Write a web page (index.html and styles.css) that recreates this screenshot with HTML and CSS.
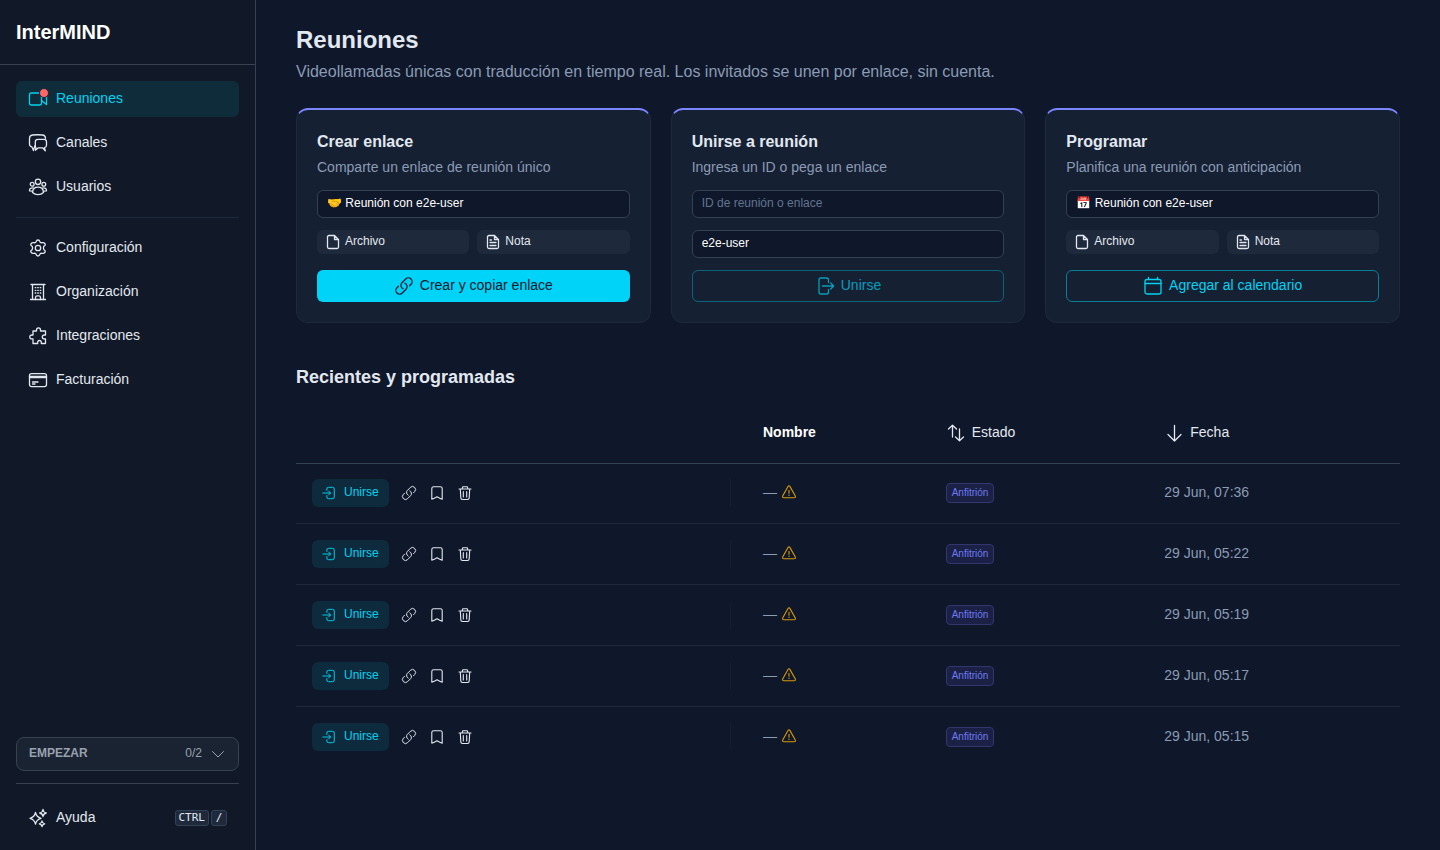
FILE: index.html
```html
<!DOCTYPE html>
<html lang="es">
<head>
  <meta charset="UTF-8">
  <meta name="viewport" content="width=device-width, initial-scale=1.0">
  <title>InterMIND</title>
  <link rel="stylesheet" href="styles.css">
</head>
<body>
<!-- Icon sprite -->
<svg class="sprite" aria-hidden="true">
  <symbol id="i-video" viewBox="0 0 20 20"><rect x="1.500" y="4" width="12" height="12" rx="1.800"/><path d="M13.500 11.500l5 4V6.500"/><path d="M13.500 8.500l2-1"/></symbol>
  <symbol id="i-chat" viewBox="0 0 20 20"><path d="M6.800 12.800L5.500 17.500L3.800 13.800C2.200 13.400 1.500 12.500 1.500 11V5.500C1.500 3.300 2.500 2.200 4.500 2q5-.5 10 0c2 .2 2.900 1.300 3 3.300"/><path d="M10 6.300h6q2.500 0 2.500 2.500v3.400q0 2-2 2.400l.8 3.200-2.800-3H10.300l-2.800 2.400.3-2.800q-.5-.6-.5-1.700V8.800q0-2.500 2.700-2.500z"/></symbol>
  <symbol id="i-users" viewBox="0 0 20 20"><circle cx="10" cy="4.800" r="2.700"/><circle cx="4.200" cy="7.200" r="1.900"/><circle cx="15.800" cy="7.200" r="1.900"/><path d="M4.500 15.500C4.700 12 7 10.200 10 10.200s5.300 1.800 5.500 5.300c-3 2.700-8 2.700-11 0z"/><path d="M4.300 14.200l-2.800-.4c-.1-1.900.9-3 3.700-2.900M15.700 14.200l2.800-.4c.1-1.900-.9-3-3.700-2.900"/></symbol>
  <symbol id="i-gear" viewBox="0 0 20 20"><circle cx="10" cy="10" r="2.700"/><path d="M8.200 3.600Q8.500 2 10 2T11.800 3.600Q12.300 5 13.900 4.700Q15.900 4.200 16.900 5.700T16 8.200Q14.900 10 16 11.800Q17.800 12.900 16.900 14.300T13.900 15.300Q12.300 15 11.800 16.400Q11.500 18 10 18T8.200 16.400Q7.700 15 6.100 15.300Q4.100 15.800 3.100 14.300T4 11.800Q5.100 10 4 8.200Q2.200 7.100 3.100 5.700T6.100 4.700Q7.700 5 8.200 3.600z"/></symbol>
  <symbol id="i-building" viewBox="0 0 20 20"><path d="M3 2.500h14M2.500 17.500h15M4.500 2.500v15M15.500 2.500v15"/><path d="M7.500 17.500v-2q0-1.700 1.700-1.700h1.600q1.700 0 1.700 1.700v2M7.200 5.700h.6M9.700 5.700h.6M12.200 5.700h.6M7.200 8.300h.6M9.700 8.300h.6M12.200 8.300h.6M7.200 11h.6M9.700 11h.6M12.200 11h.6"/></symbol>
  <symbol id="i-puzzle" viewBox="0 0 20 20"><path d="M5 5h3.500V4Q8.500 1.800 10.500 1.800T12.500 4v1h5v4h-1Q14.300 9 14.300 11t2.200 2h1v4.500h-4.200v-1q0-2-1.800-2t-1.800 2v1H5v-4.700H4Q1.800 12.800 1.800 10.900T4 9h1z"/></symbol>
  <symbol id="i-card" viewBox="0 0 20 20"><rect x="1.500" y="3.600" width="17" height="13" rx="2"/><path d="M1.500 6.500h17M1.500 7.500h17M4.500 12h5.500M4.500 14h2.500"/></symbol>
  <symbol id="i-spark" viewBox="0 0 20 20"><path d="M7.500 4.500Q8.500 9 13 10.300Q8.500 11.500 7.500 16Q6.500 11.500 2 10.300Q6.500 9 7.500 4.500zM15 1.500q.5 3 3.300 3.500q-2.800.5-3.300 3.500q-.5-3-3.300-3.500q2.800-.5 3.300-3.500zM14 13q.4 2.400 2.700 2.800q-2.300.4-2.700 2.800q-.4-2.400-2.700-2.800q2.300-.4 2.700-2.800z"/></symbol>
  <symbol id="i-down" viewBox="0 0 16 16"><path d="M2.500 5.500L8 11l5.500-5.500"/></symbol>
  <symbol id="i-file" viewBox="0 0 16 16"><path d="M9.500 1.500H4Q2.500 1.500 2.500 3v10q0 1.500 1.500 1.500h8q1.500 0 1.500-1.500V5.500zM9.500 1.500v4h4"/></symbol>
  <symbol id="i-note" viewBox="0 0 16 16"><path d="M9.500 1.500H4Q2.500 1.500 2.500 3v10q0 1.500 1.500 1.500h8q1.500 0 1.500-1.500V5.500zM9.500 1.500v4h4M5 6h1.500M5 8.500h6M5 11.500h6"/></symbol>
  <symbol id="i-link" viewBox="0 0 24 24"><path stroke-width="1.500" d="M13.190 8.688a4.500 4.500 0 0 1 1.242 7.244l-4.500 4.500a4.500 4.500 0 0 1-6.364-6.364l1.757-1.757m13.350-.622 1.757-1.757a4.500 4.500 0 0 0-6.364-6.364l-4.500 4.500a4.500 4.500 0 0 0 1.242 7.244"/></symbol>
  <symbol id="i-exit" viewBox="0 0 20 20"><path d="M13.500 6.500V4q0-2-2-2H6Q4 2 4 4v12q0 2 2 2h5.500q2 0 2-2v-2.500M7.500 10h11M15.700 7l3 3-3 3"/></symbol>
  <symbol id="i-enter" viewBox="0 0 16 16"><path d="M5.500 5V3.500q0-2 2-2H12q2 0 2 2v9q0 2-2 2H7.500q-2 0-2-2V11M1 8h8.500M7.500 5.700L9.800 8l-2.300 2.300"/></symbol>
  <symbol id="i-calendar" viewBox="0 0 20 20"><rect x="2" y="3.500" width="16" height="14.500" rx="2"/><path d="M2 7.500h16M5.500 1.500v2M14.500 1.500v2"/></symbol>
  <symbol id="i-bookmark" viewBox="0 0 16 16"><path d="M2.800 14.200V3.500q0-1.800 1.800-1.800h6.800q1.800 0 1.800 1.800v10.700q-2.400-.8-5.200-2.500-2.800 1.700-5.200 2.500z"/></symbol>
  <symbol id="i-trash" viewBox="0 0 16 16"><path d="M2 4h12M5 4l.8-2.300h4.400L11 4M3.300 4l.5 8.900q.1 1.600 1.600 1.600h5.200q1.500 0 1.600-1.600l.5-8.900M6.300 6.500v5.500M9.700 6.500v5.500"/></symbol>
  <symbol id="i-warn" viewBox="0 0 16 16"><path d="M7 2.600q1-1.700 2 0l5.300 9.300q.7 1.800-1.300 1.800H3q-2 0-1.300-1.800zM8 6.300v3M8 11v.5"/></symbol>
  <symbol id="i-sort" viewBox="0 0 20 20"><path d="M6.500 14V2.500M2.500 6l4-3.700 4 3.700M13.500 6v11.500M9.500 14l4 3.700 4-3.700"/></symbol>
  <symbol id="i-arrow" viewBox="0 0 20 20"><path d="M10.500 2.500v15.500M4 11.500l6.500 6.500 6.500-6.500"/></symbol>
</svg>

<div class="layout">
  <aside class="sidebar">
    <div class="brand">InterMIND</div>
    <nav class="nav">
      <a class="nav-link active" href="#"><span class="nav-icon"><svg class="icon"><use href="#i-video"/></svg><span class="dot"></span></span>Reuniones</a>
      <a class="nav-link" href="#"><svg class="icon"><use href="#i-chat"/></svg>Canales</a>
      <a class="nav-link" href="#"><svg class="icon"><use href="#i-users"/></svg>Usuarios</a>
      <hr>
      <a class="nav-link" href="#"><svg class="icon"><use href="#i-gear"/></svg>Configuración</a>
      <a class="nav-link" href="#"><svg class="icon"><use href="#i-building"/></svg>Organización</a>
      <a class="nav-link" href="#"><svg class="icon"><use href="#i-puzzle"/></svg>Integraciones</a>
      <a class="nav-link" href="#"><svg class="icon"><use href="#i-card"/></svg>Facturación</a>
    </nav>
    <div class="sidebar-bottom">
      <button class="start-btn"><strong>EMPEZAR</strong><span>0/2</span><svg class="icon small"><use href="#i-down"/></svg></button>
      <div class="help">
        <a class="nav-link" href="#"><svg class="icon"><use href="#i-spark"/></svg>Ayuda<span class="keys"><kbd>CTRL</kbd><kbd>/</kbd></span></a>
      </div>
    </div>
  </aside>

  <main class="content">
    <h1>Reuniones</h1>
    <p class="lead">Videollamadas únicas con traducción en tiempo real. Los invitados se unen por enlace, sin cuenta.</p>

    <section class="cards">
      <div class="card">
        <h3>Crear enlace</h3>
        <p>Comparte un enlace de reunión único</p>
        <input class="field" type="text" value="🤝 Reunión con e2e-user" aria-label="Nombre de la reunión">
        <div class="attach">
          <button class="chip"><svg class="icon small"><use href="#i-file"/></svg>Archivo</button>
          <button class="chip"><svg class="icon small"><use href="#i-note"/></svg>Nota</button>
        </div>
        <button class="btn btn-primary"><svg class="icon"><use href="#i-link"/></svg>Crear y copiar enlace</button>
      </div>
      <div class="card">
        <h3>Unirse a reunión</h3>
        <p>Ingresa un ID o pega un enlace</p>
        <input class="field" type="text" placeholder="ID de reunión o enlace" aria-label="ID de reunión o enlace">
        <input class="field" type="text" value="e2e-user" aria-label="Tu nombre">
        <button class="btn btn-outline" disabled><svg class="icon"><use href="#i-exit"/></svg>Unirse</button>
      </div>
      <div class="card">
        <h3>Programar</h3>
        <p>Planifica una reunión con anticipación</p>
        <input class="field" type="text" value="📅 Reunión con e2e-user" aria-label="Nombre de la reunión programada">
        <div class="attach">
          <button class="chip"><svg class="icon small"><use href="#i-file"/></svg>Archivo</button>
          <button class="chip"><svg class="icon small"><use href="#i-note"/></svg>Nota</button>
        </div>
        <button class="btn btn-outline"><svg class="icon"><use href="#i-calendar"/></svg>Agregar al calendario</button>
      </div>
    </section>

    <h2>Recientes y programadas</h2>
    <table class="meetings">
      <colgroup><col class="col-actions"><col class="col-name"><col class="col-status"><col></colgroup>
      <thead>
        <tr>
          <th></th>
          <th class="name">Nombre</th>
          <th><button class="sort"><svg class="icon"><use href="#i-sort"/></svg>Estado</button></th>
          <th><button class="sort"><svg class="icon"><use href="#i-arrow"/></svg>Fecha</button></th>
        </tr>
      </thead>
      <tbody>
        <tr>
          <td class="tools"><div class="actions">
            <button class="join"><svg class="icon tiny"><use href="#i-enter"/></svg>Unirse</button>
            <button class="icon-btn" aria-label="Copiar enlace"><svg class="icon small"><use href="#i-link"/></svg></button>
            <button class="icon-btn" aria-label="Guardar"><svg class="icon small"><use href="#i-bookmark"/></svg></button>
            <button class="icon-btn" aria-label="Eliminar"><svg class="icon small"><use href="#i-trash"/></svg></button>
          </div></td>
          <td class="name"><div class="title">—<svg class="icon small warn"><use href="#i-warn"/></svg></div></td>
          <td><span class="badge">Anfitrión</span></td>
          <td>29 Jun, 07:36</td>
        </tr>
        <tr>
          <td class="tools"><div class="actions">
            <button class="join"><svg class="icon tiny"><use href="#i-enter"/></svg>Unirse</button>
            <button class="icon-btn" aria-label="Copiar enlace"><svg class="icon small"><use href="#i-link"/></svg></button>
            <button class="icon-btn" aria-label="Guardar"><svg class="icon small"><use href="#i-bookmark"/></svg></button>
            <button class="icon-btn" aria-label="Eliminar"><svg class="icon small"><use href="#i-trash"/></svg></button>
          </div></td>
          <td class="name"><div class="title">—<svg class="icon small warn"><use href="#i-warn"/></svg></div></td>
          <td><span class="badge">Anfitrión</span></td>
          <td>29 Jun, 05:22</td>
        </tr>
        <tr>
          <td class="tools"><div class="actions">
            <button class="join"><svg class="icon tiny"><use href="#i-enter"/></svg>Unirse</button>
            <button class="icon-btn" aria-label="Copiar enlace"><svg class="icon small"><use href="#i-link"/></svg></button>
            <button class="icon-btn" aria-label="Guardar"><svg class="icon small"><use href="#i-bookmark"/></svg></button>
            <button class="icon-btn" aria-label="Eliminar"><svg class="icon small"><use href="#i-trash"/></svg></button>
          </div></td>
          <td class="name"><div class="title">—<svg class="icon small warn"><use href="#i-warn"/></svg></div></td>
          <td><span class="badge">Anfitrión</span></td>
          <td>29 Jun, 05:19</td>
        </tr>
        <tr>
          <td class="tools"><div class="actions">
            <button class="join"><svg class="icon tiny"><use href="#i-enter"/></svg>Unirse</button>
            <button class="icon-btn" aria-label="Copiar enlace"><svg class="icon small"><use href="#i-link"/></svg></button>
            <button class="icon-btn" aria-label="Guardar"><svg class="icon small"><use href="#i-bookmark"/></svg></button>
            <button class="icon-btn" aria-label="Eliminar"><svg class="icon small"><use href="#i-trash"/></svg></button>
          </div></td>
          <td class="name"><div class="title">—<svg class="icon small warn"><use href="#i-warn"/></svg></div></td>
          <td><span class="badge">Anfitrión</span></td>
          <td>29 Jun, 05:17</td>
        </tr>
        <tr>
          <td class="tools"><div class="actions">
            <button class="join"><svg class="icon tiny"><use href="#i-enter"/></svg>Unirse</button>
            <button class="icon-btn" aria-label="Copiar enlace"><svg class="icon small"><use href="#i-link"/></svg></button>
            <button class="icon-btn" aria-label="Guardar"><svg class="icon small"><use href="#i-bookmark"/></svg></button>
            <button class="icon-btn" aria-label="Eliminar"><svg class="icon small"><use href="#i-trash"/></svg></button>
          </div></td>
          <td class="name"><div class="title">—<svg class="icon small warn"><use href="#i-warn"/></svg></div></td>
          <td><span class="badge">Anfitrión</span></td>
          <td>29 Jun, 05:15</td>
        </tr>
      </tbody>
    </table>
  </main>
</div>
</body>
</html>
```
FILE: styles.css
```css
:root{
  --bg:#0f172a;
  --sidebar:#111827;
  --card:#162033;
  --raised:#1e293b;
  --line:#334155;
  --text:#e2e8f0;
  --muted:#8b9bb3;
  --accent:#00d3f2;
  --violet:#7c86ff;
}
*{box-sizing:border-box;margin:0;padding:0}
body{background:var(--bg);color:var(--text);font:14px/20px "Liberation Sans",Arial,sans-serif}
button,input{font:inherit;color:inherit}
button{background:none;border:none;cursor:pointer}
a{color:inherit;text-decoration:none}
.sprite{display:none}

/* icons hang 2px below the label box, the parents pad their bottom by the same */
.icon{width:20px;height:20px;flex:none;margin-bottom:-2px;fill:none;stroke:currentColor;stroke-width:1.3;stroke-linecap:round;stroke-linejoin:round}
.icon.small{width:16px;height:16px}
.icon.tiny{width:14px;height:14px}

.layout{display:flex;min-height:100vh}

/* Sidebar */
.sidebar{width:256px;flex:none;display:flex;flex-direction:column;background:var(--sidebar);border-right:1px solid #374151}
.brand{padding:16px;font-size:20px;line-height:32px;font-weight:700;color:#fff;border-bottom:1px solid #374151}
.nav{display:flex;flex-direction:column;gap:8px;padding:16px}
.nav hr{border:none;border-top:1px solid var(--raised);margin:4px 0}
.nav-link{display:flex;align-items:center;gap:8px;height:36px;padding:0 12px 2px;border-radius:6px}
.nav-link.active{background:#0f2c3b;color:var(--accent)}
.nav-icon{position:relative;display:flex}
.dot{position:absolute;top:0;right:0;width:8px;height:8px;border:1px solid #0f2c3b;border-radius:50%;background:#ff6467;box-sizing:content-box;margin:-1px}
.sidebar-bottom{margin-top:auto;padding:0 16px 14px}
.start-btn{display:flex;align-items:center;gap:8px;width:100%;height:34px;padding:0 12px 2px;border:1px solid #374151;border-radius:8px;background:#1a2332;color:#99a1af;font-size:12px;line-height:16px}
.start-btn span{margin-left:auto}
.start-btn .icon{stroke-width:1}
.help{margin-top:12px;padding-top:16px;border-top:1px solid #374151}
.keys{display:flex;gap:2px;margin:0 0 -2px auto}
kbd{min-width:16px;height:16px;padding:0 3px;border:1px solid var(--line);border-radius:3px;background:var(--raised);font:11px/14px "DejaVu Sans Mono",monospace;text-align:center}

/* Content */
.content{flex:1;min-width:0;padding:24px 40px}
h1{font-size:24px;line-height:32px}
.lead{margin-top:4px;font-size:16px;line-height:24px;color:var(--muted)}
h2{margin-top:40px;font-size:18px;line-height:28px}

.cards{display:grid;grid-template-columns:repeat(3,1fr);gap:20px;margin-top:24px}
.card{display:flex;flex-direction:column;padding:20px;background:var(--card);border:1px solid var(--raised);border-top:2px solid var(--violet);border-radius:12px}
.card h3{font-size:16px;line-height:24px}
.card p{margin-top:4px;padding-bottom:2px;line-height:18px;color:var(--muted)}
.field{width:100%;height:28px;margin-top:12px;padding:0 9px 2px;border:1px solid var(--line);border-radius:6px;background:var(--bg);color:#fff;font-size:12px}
.field::placeholder{color:#62748e}
.attach{display:flex;gap:8px;margin:12px 0 4px}
.chip{flex:1;display:flex;align-items:center;gap:4px;height:24px;padding:0 8px 2px;border-radius:6px;background:var(--raised);font-size:12px;line-height:16px}
.btn{display:flex;align-items:center;justify-content:center;gap:6px;height:32px;margin-top:12px;padding-bottom:2px;border-radius:6px}
.btn-primary{background:#00d3f8;color:var(--bg)}
.btn-outline{border:1px solid #067f95;color:var(--accent)}
.btn-outline:disabled{opacity:.7;cursor:default}

/* Meetings table */
.meetings{width:100%;margin-top:12px;table-layout:fixed;border-collapse:separate;border-spacing:0}
.col-actions{width:39.4%}
.col-name{width:18%}
.col-status{width:19.8%}
.meetings th{height:61px;padding:0 16px;border-bottom:1px solid var(--line);text-align:left;color:#fff}
.meetings td{padding:16px 16px 18px;border-bottom:1px solid var(--raised);color:var(--muted)}
.meetings td.tools{padding:16px 0 16px 16px}
.meetings tbody tr:first-child td{padding-top:15px}
.meetings tbody tr:last-child td{border-bottom-color:transparent}
.meetings .name{padding-left:32px}
.meetings th.name{padding-bottom:2px}
.sort{display:flex;align-items:center;gap:6px;padding-bottom:2px;color:var(--text);font-weight:400}
.actions{display:flex;align-items:center;height:28px;border-right:1px solid #141e31;color:var(--text)}
.actions .icon{stroke-width:1.1}
.join{display:flex;align-items:center;gap:8px;height:28px;margin-right:8px;padding:0 10px 2px;border-radius:6px;background:#0e2a3d;color:var(--accent);font-size:12px;line-height:16px}
.icon-btn{display:flex;align-items:center;justify-content:center;width:24px;height:24px;margin-right:4px;padding-bottom:2px}
.title{display:flex;align-items:center;gap:4px}
.title .icon{margin-bottom:0;stroke-width:1.1}
.warn{color:#d99a08}
.badge{display:inline-block;padding:1px 5px;border:1px solid #31366f;border-radius:4px;background:#1a2145;color:#6f79f2;font-size:10px;line-height:16px}
```
